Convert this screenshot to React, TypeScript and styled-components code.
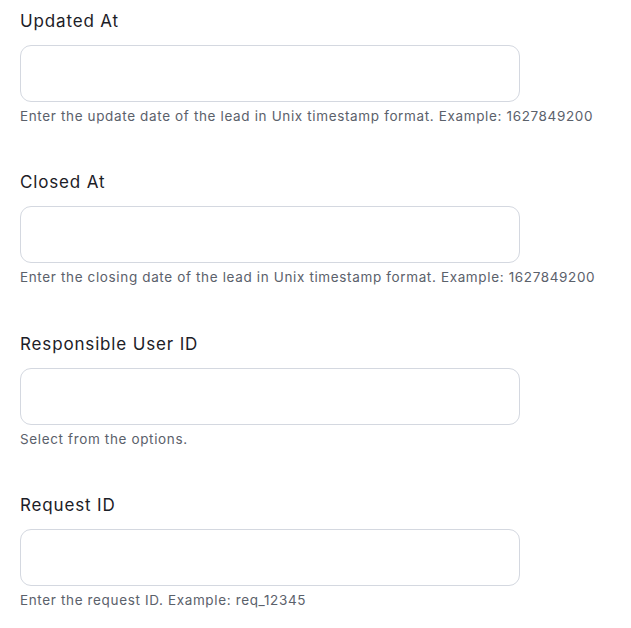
import React from 'react';
import styled, { createGlobalStyle } from 'styled-components';

const GlobalStyle = createGlobalStyle`
    body {
        margin: 0;
        background: #ffffff;
        font-family: Inter, "Noto Sans", sans-serif;
    }
`;

const Form = styled.div`
    display: flex;
    flex-direction: column;
    gap: 43.3px;
    padding: 8px 20px;
`;

const Field = styled.div`
    display: flex;
    flex-direction: column;
`;

const Label = styled.label`
    font-size: 17px;
    line-height: 24px;
    font-weight: 400;
    letter-spacing: 0.85px;
    color: #1c2027;
    padding-top: 1px;
    margin-bottom: 12px;
`;

const Input = styled.input`
    box-sizing: border-box;
    width: 500px;
    height: 57px;
    border: 1px solid #d4d8e0;
    border-radius: 11px;
    background: #fff;
    padding: 0 14px;
    font: inherit;
    outline: none;
`;

const Help = styled.div`
    margin-top: 4px;
    font-size: 13.5px;
    line-height: 20px;
    color: #5b616b;
    letter-spacing: 0.64px;
`;

const fields = [
    { label: 'Updated At', help: 'Enter the update date of the lead in Unix timestamp format. Example: 1627849200' },
    { label: 'Closed At', help: 'Enter the closing date of the lead in Unix timestamp format. Example: 1627849200' },
    { label: 'Responsible User ID', help: 'Select from the options.' },
    { label: 'Request ID', help: 'Enter the request ID. Example: req_12345' },
];

export default function App() {
    return (
        <>
            <GlobalStyle />
            <Form>
                {fields.map((f) => (
                    <Field key={f.label}>
                        <Label>{f.label}</Label>
                        <Input />
                        <Help>{f.help}</Help>
                    </Field>
                ))}
            </Form>
        </>
    );
}
